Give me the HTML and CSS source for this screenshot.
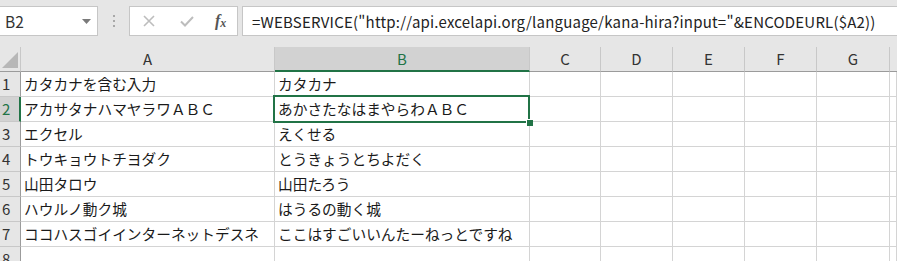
FILE: index.html
```html
<!DOCTYPE html>
<html lang="ja">
<head>
    <meta charset="UTF-8">
    <title>WEBSERVICE kana-hira</title>
    <link rel="stylesheet" href="styles.css">
</head>
<body>
    <div class="formula-bar">
        <div class="name-box">
            <span>B2</span>
            <svg class="name-arrow" width="9" height="5" viewBox="0 0 9 5"><path d="M0 0 L9 0 L4.5 5 Z" fill="#7a7a7a"/></svg>
        </div>
        <div class="grip"><i></i><i></i><i></i></div>
        <div class="fx-buttons">
            <svg width="14" height="14" viewBox="0 0 14 14"><path d="M2 2 L12 12 M12 2 L2 12" stroke="#bdbdbd" stroke-width="1.6" fill="none"/></svg>
            <svg width="16" height="14" viewBox="0 0 16 14"><path d="M2 7.5 L6 11.5 L14 3" stroke="#bdbdbd" stroke-width="2" fill="none"/></svg>
            <span class="fx">f<sub>x</sub></span>
        </div>
        <div class="formula-input">=WEBSERVICE("http://api.excelapi.org/language/kana-hira?input="&amp;ENCODEURL($A2))</div>
    </div>

    <div class="sheet">
        <div class="corner"><svg width="16" height="16" viewBox="0 0 16 16"><path d="M16 0 L16 16 L0 16 Z" fill="#b7b7b7"/></svg></div>
        <div class="col-head">A</div>
        <div class="col-head active">B</div>
        <div class="col-head">C</div>
        <div class="col-head">D</div>
        <div class="col-head">E</div>
        <div class="col-head">F</div>
        <div class="col-head">G</div>
        <div class="col-head rest"></div>

        <div class="row-head">1</div>
        <div class="cell">カタカナを含む入力</div>
        <div class="cell">カタカナ</div>
        <div class="cell"></div><div class="cell"></div><div class="cell"></div><div class="cell"></div><div class="cell"></div><div class="cell"></div>

        <div class="row-head active">2</div>
        <div class="cell">アカサタナハマヤラワＡＢＣ</div>
        <div class="cell selected">あかさたなはまやらわＡＢＣ</div>
        <div class="cell"></div><div class="cell"></div><div class="cell"></div><div class="cell"></div><div class="cell"></div><div class="cell"></div>

        <div class="row-head">3</div>
        <div class="cell">エクセル</div>
        <div class="cell">えくせる</div>
        <div class="cell"></div><div class="cell"></div><div class="cell"></div><div class="cell"></div><div class="cell"></div><div class="cell"></div>

        <div class="row-head">4</div>
        <div class="cell">トウキョウトチヨダク</div>
        <div class="cell">とうきょうとちよだく</div>
        <div class="cell"></div><div class="cell"></div><div class="cell"></div><div class="cell"></div><div class="cell"></div><div class="cell"></div>

        <div class="row-head">5</div>
        <div class="cell">山田タロウ</div>
        <div class="cell">山田たろう</div>
        <div class="cell"></div><div class="cell"></div><div class="cell"></div><div class="cell"></div><div class="cell"></div><div class="cell"></div>

        <div class="row-head">6</div>
        <div class="cell">ハウルノ動ク城</div>
        <div class="cell">はうるの動く城</div>
        <div class="cell"></div><div class="cell"></div><div class="cell"></div><div class="cell"></div><div class="cell"></div><div class="cell"></div>

        <div class="row-head">7</div>
        <div class="cell">ココハスゴイインターネットデスネ</div>
        <div class="cell">ここはすごいいんたーねっとですね</div>
        <div class="cell"></div><div class="cell"></div><div class="cell"></div><div class="cell"></div><div class="cell"></div><div class="cell"></div>

        <div class="row-head">8</div>
        <div class="cell"></div><div class="cell"></div>
        <div class="cell"></div><div class="cell"></div><div class="cell"></div><div class="cell"></div><div class="cell"></div><div class="cell"></div>
    </div>
</body>
</html>
```

FILE: styles.css
```css
body {
    margin: 0;
    background: #fff;
    font-family: "Noto Sans CJK JP", "Noto Sans", sans-serif;
    color: #222;
    overflow: hidden;
}

/* 数式バー */
.formula-bar {
    display: flex;
    align-items: center;
    height: 47px;
    padding-bottom: 5px;
    box-sizing: border-box;
    background: #e6e6e6;
}

.name-box {
    width: 98px;
    height: 30px;
    box-sizing: border-box;
    background: #fff;
    border: 1px solid #c6c6c6;
    border-left: none;
    display: flex;
    align-items: center;
    justify-content: space-between;
    padding: 0 6px 0 5px;
    font-size: 15.5px;
    color: #333;
}

.grip {
    width: 31px;
    display: flex;
    flex-direction: column;
    align-items: center;
    gap: 3px;
}

.grip i {
    width: 2px;
    height: 2px;
    background: #a8a8a8;
}

.fx-buttons {
    width: 109px;
    height: 30px;
    box-sizing: border-box;
    background: #fff;
    border: 1px solid #c6c6c6;
    display: flex;
    align-items: center;
    padding: 0 0 0 12px;
    gap: 23px;
}

.fx {
    font-family: "Liberation Serif", serif;
    font-style: italic;
    font-weight: bold;
    font-size: 16px;
    color: #555;
    margin-left: -3px;
}

.fx sub {
    font-size: 12px;
    vertical-align: -1px;
}

.formula-input {
    flex: 1;
    height: 30px;
    box-sizing: border-box;
    margin-left: 4px;
    background: #fff;
    border: 1px solid #c6c6c6;
    border-right: none;
    padding-left: 9px;
    display: flex;
    align-items: center;
    font-size: 15px;
    letter-spacing: 0.2px;
    color: #222;
    white-space: nowrap;
    overflow: hidden;
}

/* シート */
.sheet {
    display: grid;
    grid-template-columns: 21px 254px 255px 71px 72px 72px 72px 73px 1fr;
    grid-template-rows: 25px repeat(8, 25px);
}

.corner,
.col-head,
.row-head,
.cell {
    box-sizing: border-box;
    border-right: 1px solid #d4d4d4;
    border-bottom: 1px solid #d4d4d4;
}

.corner {
    background: #e6e6e6;
    border-right-color: #c8c8c8;
    border-bottom-color: #9b9b9b;
    display: flex;
    align-items: flex-end;
    justify-content: flex-end;
    padding: 0 2px 3px 0;
}

.col-head {
    background: #e6e6e6;
    border-right-color: #c8c8c8;
    border-bottom-color: #9b9b9b;
    text-align: center;
    font-size: 15px;
    line-height: 24px;
    color: #333;
}

.col-head.active {
    background: #d2d2d2;
    color: #217346;
    border-bottom: 2px solid #217346;
    line-height: 23px;
}

.col-head.rest {
    border-right: none;
}

.row-head {
    background: #e6e6e6;
    border-right-color: #9b9b9b;
    border-bottom-color: #c8c8c8;
    font-size: 15px;
    line-height: 24px;
    padding-left: 2px;
    color: #333;
}

.row-head.active {
    background: #d2d2d2;
    border-right: 2px solid #217346;
    color: #217346;
}

.cell {
    font-size: 14.7px;
    line-height: 24px;
    padding-left: 3px;
    white-space: nowrap;
    color: #1a1a1a;
}

.cell.selected {
    position: relative;
}

/* 選択枠とフィルハンドル */
.cell.selected::before {
    content: "";
    position: absolute;
    left: -2px;
    top: -2px;
    right: -1px;
    bottom: -2px;
    border: 2px solid #217346;
}

.cell.selected::after {
    content: "";
    position: absolute;
    right: -4px;
    bottom: -5px;
    width: 6px;
    height: 6px;
    background: #217346;
    border: 1px solid #fff;
    border-width: 1px 0 0 1px;
}
```
